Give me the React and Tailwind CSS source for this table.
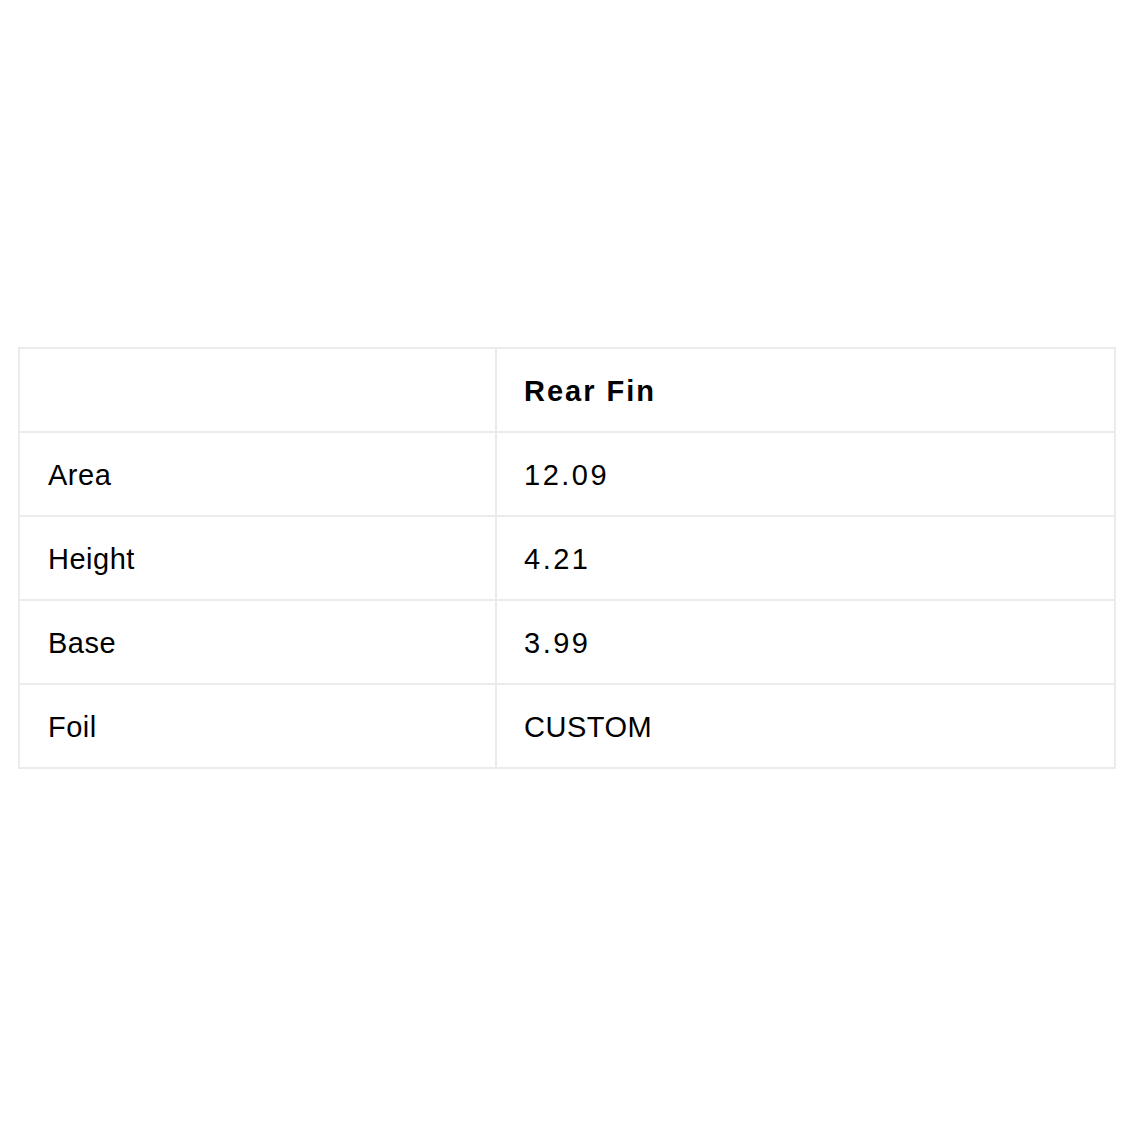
import React from "react";

const rows = [
  { label: "Area", value: "12.09", numeric: true },
  { label: "Height", value: "4.21", numeric: true },
  { label: "Base", value: "3.99", numeric: true },
  { label: "Foil", value: "CUSTOM", numeric: false },
];

export default function App() {
  return (
    <div
      className="w-[1128px] h-[1128px] bg-white flex items-center pl-[18px] pb-[12px]"
      style={{ fontFamily: '"Liberation Sans", Arial, sans-serif' }}
    >
      <table className="w-[1098px] border-collapse border-2 border-[#ebebeb] text-black text-[29px] table-fixed">
        <colgroup>
          <col className="w-[477px]" />
          <col />
        </colgroup>
        <thead>
          <tr className="h-[84px]">
            <th className="border-2 border-[#ebebeb]"></th>
            <th className="border-2 border-[#ebebeb] text-left font-bold pl-[27px] pt-[3px] tracking-[2px]">
              Rear Fin
            </th>
          </tr>
        </thead>
        <tbody>
          {rows.map((r) => (
            <tr key={r.label} className="h-[84px]">
              <td className="border-2 border-[#ebebeb] pl-[28px] pt-[3px] tracking-[0.5px]">
                {r.label}
              </td>
              <td
                className={`border-2 border-[#ebebeb] pl-[27px] pt-[3px] ${
                  r.numeric ? "tracking-[2.5px]" : "tracking-[0.5px]"
                }`}
              >
                {r.value}
              </td>
            </tr>
          ))}
        </tbody>
      </table>
    </div>
  );
}
